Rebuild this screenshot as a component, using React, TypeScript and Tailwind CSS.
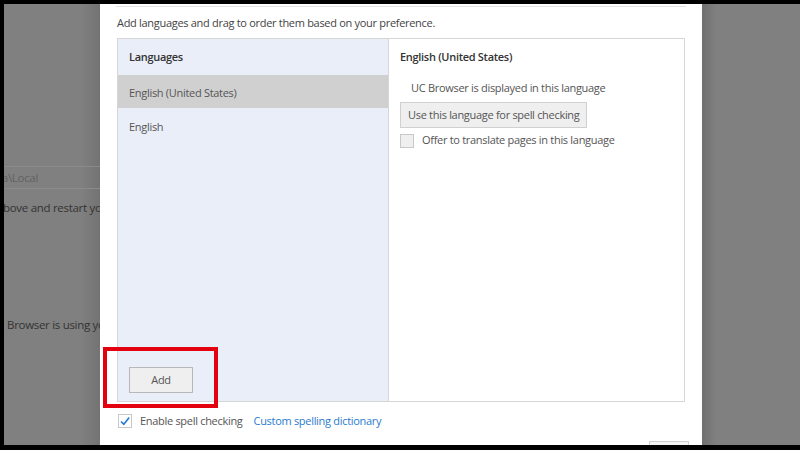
import React from "react";

const font = { fontFamily: '"Open Sans", "Noto Sans", sans-serif' };

export default function App() {
  return (
    <div className="relative w-[800px] h-[450px] bg-black flex flex-col overflow-hidden text-[11px] tracking-[-0.3px]" style={font}>
      <div className="h-[4px] shrink-0" />
      <div className="flex h-[441px] shrink-0">
        <div className="w-[4px] shrink-0 bg-black" />
        {/* left dimmed background */}
        <div className="w-[96px] shrink-0 overflow-hidden bg-gradient-to-r from-[#808080] from-80% to-[#737373] text-[11.5px] text-[#333] flex flex-col">
          <div className="h-[162px] shrink-0" />
          <div className="h-[23px] shrink-0 border-y border-[#8a8a8a] flex items-center whitespace-nowrap text-[#626262] ml-[-6px] w-[110px]">
            ta\Local
          </div>
          <div className="h-[5px] shrink-0" />
          <div className="whitespace-nowrap ml-[-1px] h-[28px] shrink-0 flex items-center">bove and restart your</div>
          <div className="h-[89px] shrink-0" />
          <div className="whitespace-nowrap ml-[3px] h-[28px] shrink-0 flex items-center">Browser is using your</div>
        </div>
        {/* dialog */}
        <div className="w-[602px] shrink-0 bg-white flex flex-col px-[17px] text-[#444] overflow-hidden">
          <div className="h-[2px] shrink-0" />
          <div className="h-px shrink-0 bg-[#e3e3e3] mx-[-1px]" />
          <div className="h-[31px] shrink-0 flex items-center pt-[2px]">Add languages and drag to order them based on your preference.</div>
          <div className="h-[364px] shrink-0 border border-[#d6d6d6] flex">
            <div className="w-[271px] bg-[#e9eef8] border-r border-[#d6d6d6] flex flex-col">
              <div className="h-[36px] flex items-center px-[11px] font-semibold text-[#333]">Languages</div>
              <div className="h-[33px] flex items-center px-[11px] pt-[3px] bg-[#d0d0d0] text-[#555]">English (United States)</div>
              <div className="h-[36px] flex items-center px-[11px] pt-[2px] text-[#555]">English</div>
              <div className="flex-1" />
              <div className="px-[11px] pb-[8px]">
                <div className="w-[64px] h-[26px] border border-[#b8b8b8] bg-[#efefef] flex items-center justify-center text-[#555]">Add</div>
              </div>
            </div>
            <div className="flex-1 flex flex-col px-[11px]">
              <div className="h-[36px] flex items-center font-semibold text-[#333]">English (United States)</div>
              <div className="h-[26px] flex items-center pl-[11px] text-[#555]">UC Browser is displayed in this language</div>
              <div className="mt-[1px]">
                <div className="inline-flex h-[26px] items-center px-[7px] border border-[#d0d0d0] bg-[#efefef] text-[#555]">Use this language for spell checking</div>
              </div>
              <div className="flex items-center h-[25px]">
                <div className="w-[14px] h-[14px] border border-[#c8c8c8] bg-[#efefef]" />
                <span className="ml-[8px] text-[#555]">Offer to translate pages in this language</span>
              </div>
            </div>
          </div>
          <div className="h-[38px] shrink-0 flex items-center">
            <div className="w-[14px] h-[14px] border border-[#c8c8c8] bg-white flex items-center justify-center ml-[1px]">
              <svg width="12" height="12" viewBox="0 0 12 12"><path d="M2 6.5 L4.8 9.2 L10.2 2.5" fill="none" stroke="#2b7ad8" strokeWidth="1.6" /></svg>
            </div>
            <span className="ml-[8px] text-[#555]">Enable spell checking</span>
            <span className="ml-[11px] text-[#2a7ccf]">Custom spelling dictionary</span>
          </div>
          <div className="flex justify-end shrink-0 pt-[1px]">
            <div className="w-[40px] h-[10px] border border-[#cfcfcf] bg-[#f5f5f5] mr-[-4px]" />
          </div>
        </div>
        <div className="flex-1 bg-gradient-to-r from-[#707070] to-[#808080] to-15%" />
      </div>
      <div className="h-[5px] shrink-0" />
      {/* red highlight */}
      <div className="absolute left-[103px] top-[347px] w-[115px] h-[61px] border-[4px] border-[#e3000f]" />
    </div>
  );
}
